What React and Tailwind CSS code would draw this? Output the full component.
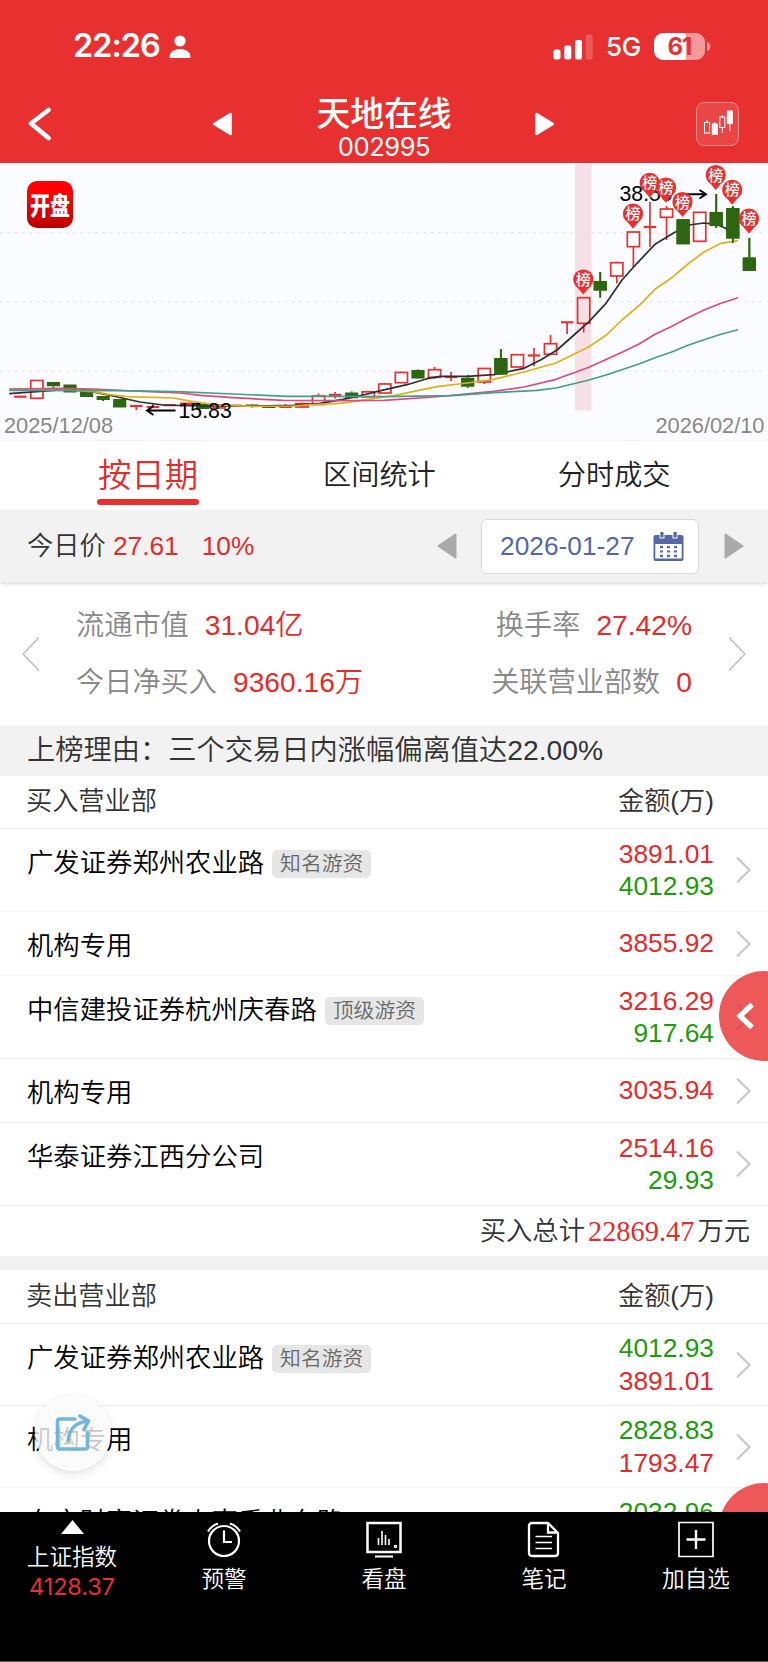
import React from "react";

// [type, bodyTop, bodyBottom, high, low] - a body without height is drawn as a flat line
const candles = [
  ["r", 236.7, 236.7, 236.7, 236.7],
  ["r", 220.5, 238.3, 220.5, 238.3],
  ["g", 222, 226.3, 222, 228],
  ["g", 224.5, 232.5, 224.5, 232.5],
  ["g", 229.5, 237, 229.5, 237],
  ["g", 236, 240, 236, 241],
  ["g", 239, 247.5, 239, 247.5],
  ["r", 246, 246, 246, 250],
  ["r", 246, 248, 243.5, 248],
  ["r", 244.3, 246, 244.3, 246],
  ["r", 242.5, 245, 242.5, 245],
  ["g", 244, 249, 244, 249],
  ["r", 245, 248, 245, 248],
  ["r", 244.8, 246.5, 244.8, 246.5],
  ["g", 244.5, 247, 244, 247.5],
  ["g", 245.8, 248, 245.8, 248],
  ["r", 246.3, 247.5, 244, 247.5],
  ["r", 243.7, 247, 242.5, 247.5],
  ["r", 236, 244.5, 233.5, 244.5],
  ["r", 233.8, 236, 232, 238.5],
  ["g", 232.5, 238.3, 231.5, 238.3],
  ["r", 231.8, 236.8, 231.8, 236.8],
  ["r", 224, 233, 223, 233],
  ["r", 212.5, 222.7, 211.5, 222.7],
  ["g", 210, 218.5, 209.5, 219],
  ["r", 209.7, 217.3, 207, 219],
  ["r", 217, 217, 212, 221],
  ["g", 217.7, 226.8, 215, 228],
  ["r", 208.5, 222, 208, 224],
  ["g", 198, 214.5, 189, 215],
  ["r", 194.7, 207, 194.7, 207],
  ["r", 195.5, 195.5, 188, 206],
  ["r", 183.7, 194.3, 175, 194.3],
  ["r", 162.3, 162.3, 162.3, 174],
  ["r", 137.7, 163.3, 137.7, 172.5],
  ["g", 121, 130.5, 112, 137.5],
  ["r", 102.7, 116, 102.7, 123.5],
  ["r", 72, 86.7, 72, 107],
  ["r", 67, 67, 42, 87],
  ["r", 49, 57.3, 46, 80],
  ["g", 59.3, 84.3, 59.3, 84.3],
  ["r", 52.3, 81.3, 52.3, 81.3],
  ["g", 52, 66, 34, 68],
  ["g", 48, 78.5, 46, 83],
  ["g", 97.5, 111, 78, 111],
];

const averages = [
  {
    color: "#2f2f33",
    points:
      "9.3,233.7 36.7,231.7 60,230 86.7,230.7 113,236 140,242 163,245 200,246 253,246 293,245.3 320,243.3 343,239.3 363,235 384,229.8 407,224.7 427,218.7 440,216.3 467,216.3 494,214.7 524,208.3 541,199.7 557,190 574,175 589,161.7 606,143.3 622,120 637,103.3 655,84.3 674,72.7 689,65 704,63 716,64.3 725,68 732,73",
  },
  {
    color: "#deb01a",
    points:
      "9.3,230 67,230 93,231.7 110,234.7 127,236.7 173,238 193,241.7 217,245 253,246.3 293,246 313,244.7 340,243.3 360,240.7 384,237 394,235.7 414,231.3 437,226.7 467,223 494,219.3 524,212 556,203 589,186.7 606,175.3 622,160 639,145.7 655,129.3 671,118.3 688,104 704,92 721,83.3 738,80.7",
  },
  {
    color: "#d94a87",
    points:
      "9.3,229 60,228.3 93,229 133,231 180,233 200,235.3 233,237.7 283,240.3 333,240.7 384,240.3 434,237 494,231.3 524,227 556,219.3 589,207.3 622,192.3 639,184 655,174.3 671,166.7 688,157.7 704,150 721,143.3 738,137.7",
  },
  {
    color: "#43a084",
    points:
      "9.3,230.3 117,230.7 177,231.7 233,234 287,236.3 333,236.3 384,236.7 451,235.7 494,232.7 537,230.3 556,228 589,220 606,215 639,204 655,197.7 671,192.3 688,185.3 704,179.7 721,174.3 738,169.7",
  },
];

const pins = [
  [583.3, 119.5],
  [633, 53.7],
  [649.7, 22.8],
  [666, 27.7],
  [682.5, 42],
  [715.7, 15],
  [732.2, 29.8],
  [749, 58.7],
];

const buyRows = [
  { name: "广发证券郑州农业路", tag: "知名游资", red: "3891.01", green: "4012.93" },
  { name: "机构专用", red: "3855.92" },
  { name: "中信建投证券杭州庆春路", tag: "顶级游资", red: "3216.29", green: "917.64" },
  { name: "机构专用", red: "3035.94" },
  { name: "华泰证券江西分公司", red: "2514.16", green: "29.93" },
];

const sellRows = [
  { name: "广发证券郑州农业路", tag: "知名游资", red: "3891.01", green: "4012.93" },
  { name: "机构专用", red: "1793.47", green: "2828.83" },
  { name: "东方财富证券山南香曲东路", green: "2032.96" },
];

const StatusBar = () => (
  <div className="flex h-[93px] items-center pl-[73px] pr-[57px] font-['Inter','Noto_Sans_CJK_SC',sans-serif]">
    <span className="w-[88px] whitespace-nowrap text-[32.5px] font-semibold leading-none tracking-[-1px]">22:26</span>
    <svg className="ml-[8px] mt-px" width="22" height="24" viewBox="0 0 22 24" fill="#fff">
      <circle cx="11" cy="6" r="5.6" />
      <path d="M0.5 21.5C0.5 17 5.5 14 11 14s10.500 3 10.500 7.500c0 1-.5 1.500-1.500 1.500H2c-1 0-1.500-.5-1.500-1.500z" />
    </svg>
    <svg className="ml-auto" width="40" height="26" viewBox="0 0 40 26" fill="#fff">
      <rect x="0.500" y="15.500" width="7" height="10" rx="2" />
      <rect x="11.300" y="11.500" width="7" height="14" rx="2" />
      <rect x="22" y="6" width="7" height="19.500" rx="2" />
      <rect x="32.700" y="0.500" width="7" height="25" rx="2" opacity="0.2" />
    </svg>
    <span className="ml-[13px] mt-px text-[26px] font-medium leading-none tracking-[-0.3px]">5G</span>
    <div className="ml-[13px] flex h-[27px] w-[51px] items-center justify-center rounded-[9px] bg-[linear-gradient(to_right,#fff_62%,#f59a9a_62%)]">
      <span className="text-[24px] font-bold leading-none tracking-[-1px] text-[#e83030]">61</span>
    </div>
    <svg className="ml-[2px]" width="4" height="9" viewBox="0 0 4 9">
      <path d="M0 0c2 .5 3.500 2.300 3.500 4.500S2 8.500 0 9z" fill="#f59a9a" />
    </svg>
  </div>
);

const TitleBar = () => (
  <div className="flex h-[70px] items-start pl-[28px]">
    <svg className="mt-[14px]" width="24" height="34" viewBox="0 0 24 34" fill="none">
      <path d="M20.500 3L3 16.500 20.500 31" stroke="#fff" strokeWidth="4.600" strokeLinecap="round" strokeLinejoin="round" />
    </svg>
    <svg className="ml-[160px] mt-[19px]" width="21" height="24" viewBox="0 0 21 24">
      <path d="M18.500 2v20L2 12z" fill="#fff" stroke="#fff" strokeWidth="2.500" strokeLinejoin="round" />
    </svg>
    <div className="ml-[67px] flex w-[168px] flex-col items-center">
      <span className="mt-[2px] h-[38px] text-[33.8px] font-medium leading-[38px]">天地在线</span>
      <span className="font-['Inter',sans-serif] text-[25.5px] font-normal leading-[28px] tracking-[-0.4px]">002995</span>
    </div>
    <svg className="ml-[66px] mt-[19px]" width="21" height="24" viewBox="0 0 21 24">
      <path d="M2.500 2v20L19 12z" fill="#fff" stroke="#fff" strokeWidth="2.500" strokeLinejoin="round" />
    </svg>
    <div className="ml-[141px] mt-[9px] flex h-[44px] w-[43px] items-center justify-center rounded-lg border border-[#f38a8a] bg-[#eb4646]">
      <svg width="30" height="28" viewBox="0 0 30 28" fill="none" stroke="#fff">
        <path d="M4 10v2.500M11.700 12v3M19.300 5v3M19.300 18v5M26.800 14v7" />
        <rect x="1.500" y="12.500" width="5" height="10.500" />
        <rect x="9.300" y="14" width="5" height="10.500" fill="#fff" />
        <rect x="16.800" y="7" width="5" height="10.500" />
        <rect x="24.300" y="1" width="5" height="12.500" fill="#fff" />
      </svg>
    </div>
  </div>
);

const Candle = ({ x, data }) => {
  const [type, top, bottom, high, low] = data;
  const color = type === "r" ? "#e83030" : "#2d6610";
  const flat = bottom - top < 2.6;

  return (
    <g stroke={color} strokeWidth={type === "r" ? 1.7 : 1.8}>
      {high < top && <line x1={x} x2={x} y1={high} y2={top} />}
      {low > bottom && <line x1={x} x2={x} y1={bottom} y2={low} />}
      {flat && type === "r" ? (
        <line x1={x - 6.2} x2={x + 6.2} y1={(top + bottom) / 2} y2={(top + bottom) / 2} strokeWidth={Math.max(2.2, bottom - top)} />
      ) : type === "r" ? (
        <rect x={x - 6.1} y={top} width="12.200" height={bottom - top} fill="none" />
      ) : (
        <rect x={x - 6.6} y={top} width="13.200" height={bottom - top} rx="0.600" fill={color} stroke="none" />
      )}
    </g>
  );
};

const KLineChart = () => (
  <div className="relative h-[278px] border-b border-[#f0f0f2] bg-[#fbfcff]">
    <svg className="block" width="768" height="277" viewBox="0 3 768 277">
      {[73, 142, 211.300].map((y) => (
        <line key={y} x1="0" x2="765" y1={y} y2={y} stroke="#e0e0e5" strokeDasharray="2.800 4.500" />
      ))}
      <rect x="575" y="4.500" width="16.400" height="246" fill="#f6dfe5" />
      {candles.map((c, i) => (
        <Candle key={i} x={20.3 + i * 16.57} data={c} />
      ))}
      {averages.map((a) => (
        <polyline key={a.color} points={a.points} fill="none" stroke={a.color} strokeWidth="1.700" strokeLinejoin="round" />
      ))}
      {candles.map((c, i) => c[0] === "g" && i > 28 && <Candle key={i} x={20.3 + i * 16.57} data={c} />)}
      <g fontFamily="Liberation Sans, sans-serif" fontSize="21.300">
        <text x="178.500" y="258">15.83</text>
        <text x="619.500" y="41">38.59</text>
      </g>
      <g stroke="#000" strokeWidth="1.900" fill="none">
        <path d="M175.500 250.500H148M153.500 246L147 250.500 153.500 255" />
        <path d="M685 34.300H705M699.500 30L706 34.300 699.500 38.500" />
      </g>
      {pins.map(([x, y]) => (
        <g key={x}>
          <path d={`M${x - 7.5} ${y + 6}L${x} ${y + 15}L${x + 7.5} ${y + 6}z`} fill="#e83030" />
          <circle cx={x} cy={y} r="10.100" fill="#e83030" />
          <text x={x} y={y + 5.6} textAnchor="middle" fontSize="15" fontWeight="500" fill="#fff" fontFamily="Noto Sans CJK SC, sans-serif">
            榜
          </text>
        </g>
      ))}
      <g fontFamily="Liberation Sans, sans-serif" fontSize="21.800" fill="#888">
        <text x="4" y="272.500">2025/12/08</text>
        <text x="764.500" y="272.500" textAnchor="end">2026/02/10</text>
      </g>
    </svg>
    <div className="absolute left-[27px] top-[18px] flex h-[47px] w-[46px] items-center justify-center rounded-[10px] bg-linear-to-b from-[#ff0000] from-30% to-[#b80000]">
      <span className="font-['Noto_Sans_CJK_SC',sans-serif] text-[20px] font-black leading-none text-white [transform:scaleY(1.25)]">开盘</span>
    </div>
  </div>
);

const Tabs = () => (
  <div className="flex h-[69px] items-start text-[28.2px] leading-[69px] text-[#222]">
    <div className="ml-[97px] flex h-[64px] w-[102px] flex-col items-center text-[33.4px] text-[#e22b2b]">
      <span className="h-[58px]">按日期</span>
      <span className="h-[6px] w-full shrink-0 rounded-full bg-[#e83030]" />
    </div>
    <span className="ml-[124px]">区间统计</span>
    <span className="ml-[122px]">分时成交</span>
  </div>
);

const Triangle = ({ flip }) => (
  <svg className={flip ? "rotate-180" : ""} width="20" height="26" viewBox="0 0 20 26">
    <path d="M18.500 1.500v23L1.500 13z" fill="#aaa" stroke="#aaa" strokeWidth="2" strokeLinejoin="round" />
  </svg>
);

const PriceBar = () => (
  <div className="relative flex h-[72px] items-center bg-[#f2f2f2] pl-[27px] pr-[24px] text-[26.3px] shadow-[0_2px_4px_rgba(0,0,0,0.14)]">
    <span className="mt-[2px] text-[#333]">今日价</span>
    <span className="ml-[7px] mt-[2px] text-[#e22b2b]">27.61</span>
    <span className="ml-[23px] mt-[2px] text-[#e22b2b]">10%</span>
    <div className="ml-auto flex items-center">
      <Triangle />
      <div className="ml-[24px] mr-[25px] flex h-[55px] w-[218px] items-center rounded-md border border-[#d8d8d8] bg-white pl-[18px]">
        <span className="mt-px text-[#5468a4]">2026-01-27</span>
        <svg className="ml-[18px]" width="31" height="29" viewBox="0 0 31 29">
          <path d="M2.500 3h4v3.500h5V3h8v3.500h5V3h4q2 0 2 2v22q0 2-2 2h-26q-2 0-2-2V5q0-2 2-2z" fill="#5468a4" />
          <path d="M7.300 0h3.200v5.500H7.300zM20.500 0h3.200v5.500h-3.200z" fill="#5468a4" />
          <rect x="2.300" y="12" width="26.400" height="14.500" fill="#fff" />
          <path d="M8.500 14v11M15.500 14v11M22.500 14v11" stroke="#5468a4" strokeWidth="3" strokeDasharray="2.200 2.200" />
        </svg>
      </div>
      <Triangle flip />
    </div>
  </div>
);

const ThinChevron = ({ flip }) => (
  <svg className={flip ? "rotate-180" : ""} width="18" height="34" viewBox="0 0 18 34" fill="none">
    <path d="M17 0.500L1 17 17 33.500" stroke="#b5b5b5" strokeWidth="1.200" />
  </svg>
);

const Stat = ({ label, value }) => (
  <div className="flex gap-4">
    <span className="text-[#888]">{label}</span>
    <span className="text-[#e22b2b]">{value}</span>
  </div>
);

const Stats = () => (
  <div className="flex h-[144px] items-center justify-between px-[22px] text-[28.2px] leading-[57px]">
    <ThinChevron />
    <div className="flex w-[616px] justify-between">
      <div>
        <Stat label="流通市值" value="31.04亿" />
        <Stat label="今日净买入" value="9360.16万" />
      </div>
      <div className="flex flex-col items-end">
        <Stat label="换手率" value="27.42%" />
        <Stat label="关联营业部数" value="0" />
      </div>
    </div>
    <ThinChevron flip />
  </div>
);

const TableHead = ({ title, className }) => (
  <div className={`flex shrink-0 items-center justify-between border-b border-[#f0f0f0] pl-[26px] pr-[54px] text-[26.2px] text-[#333] ${className}`}>
    <span>{title}</span>
    <span>金额(万)</span>
  </div>
);

const Row = ({ row, sell, className }) => {
  const red = row.red && <span className="text-[#e22b2b]">{row.red}</span>;
  const green = row.green && <span className="text-[#1d9a0c]">{row.green}</span>;

  return (
    <div className={`flex shrink-0 border-b border-[#f0f0f0] pl-[27px] pr-[17px] text-[26.35px] text-black ${className}`}>
      <div className="mt-[18px] flex h-[32px] items-center">
        <span className="leading-[32px]">{row.name}</span>
        {row.tag && (
          <span className="ml-[8px] mt-px flex h-[28px] items-center rounded-[5px] bg-[#e6e6e6] px-[8px] text-[20.8px] text-[#666]">{row.tag}</span>
        )}
      </div>
      <div className={`ml-auto flex h-full flex-col items-end leading-[32.5px] ${row.red ? "justify-center" : "pt-[8px]"}`}>
        {sell ? green : red}
        {sell ? red : green}
      </div>
      <svg className="ml-[22px] self-center" width="15" height="28" viewBox="0 0 15 28" fill="none">
        <path d="M1 1.500L13.500 14 1 26.500" stroke="#c8c8c8" strokeWidth="2.200" />
      </svg>
    </div>
  );
};

const SideButton = ({ className }) => (
  <div className={`absolute left-[719px] flex size-[90px] items-center rounded-full bg-[#e83030]/80 pl-[17px] ${className}`}>
    <svg width="19" height="28" viewBox="0 0 19 28" fill="none">
      <path d="M16 2.500L4 14l12 11.500" stroke="#fff" strokeWidth="5.300" />
    </svg>
  </div>
);

const NavItem = ({ label, className, children }) => (
  <div className={`flex w-[80px] flex-col items-center ${className}`}>
    <svg className="mt-[9px]" width="36" height="37" viewBox="0 0 36 37" fill="none" stroke="#fff" strokeWidth="2.200">
      {children}
    </svg>
    <span className="mt-[7px] whitespace-nowrap leading-[30px]">{label}</span>
  </div>
);

const BottomNav = () => (
  <div className="relative flex h-[150px] shrink-0 border-b border-[#555] bg-black pl-[22px] text-[22.6px] text-white">
    <div className="flex w-[100px] flex-col items-center">
      <svg className="mt-[8px]" width="23" height="14" viewBox="0 0 23 14">
        <path d="M11.500 0L23 14H0z" fill="#fff" />
      </svg>
      <span className="mt-[9px] leading-[30px]">上证指数</span>
      <span className="font-['Inter',sans-serif] text-[23.5px] font-normal leading-[27px] tracking-[-0.1px] text-[#e83030]">4128.37</span>
    </div>
    <NavItem label="预警" className="ml-[62px]">
      <circle cx="18" cy="20" r="15" />
      <path d="M18 9.500V21h8M2 10.500Q5 5 12 2.500M34 10.500Q31 5 24 2.500" />
    </NavItem>
    <NavItem label="看盘" className="ml-[80px]">
      <path d="M1.500 2h33v29h-33z" strokeWidth="2.500" />
      <path d="M9 35.500h18" strokeWidth="2" />
      <path d="M12.500 17v7M16 10v14M19.500 14v10M23 18v6" strokeWidth="1.600" />
      <circle cx="29.500" cy="25.500" r="0.700" />
    </NavItem>
    <NavItem label="笔记" className="ml-[80px]">
      <path d="M6 2h16l10 10v20q0 3-3 3H6q-3 0-3-3V5q0-3 3-3zM22 2v9.500h10" strokeWidth="2.300" />
      <path d="M9.500 15.500H26M9.500 21.500H26M9.500 27.500H26" strokeWidth="1.500" />
    </NavItem>
    <NavItem label="加自选" className="ml-[72px]">
      <path d="M1 1.500h34v34H1z" strokeWidth="1.700" />
      <path d="M18 9v19M8.500 18.500h19" strokeWidth="2.400" />
    </NavItem>
  </div>
);

const App = () => {
  return (
    <div className="relative flex h-[1662px] w-[768px] flex-col overflow-hidden bg-white font-['Liberation_Sans','Noto_Sans_CJK_SC',sans-serif] font-[350]">
      <div className="shrink-0 bg-[#e83030] text-white">
        <StatusBar />
        <TitleBar />
      </div>

      <div className="flex h-[1349px] shrink-0 flex-col overflow-hidden *:shrink-0">
        <KLineChart />
        <Tabs />
        <PriceBar />
        <Stats />
        <div className="h-[50px] bg-[#f2f2f2] pl-[27px] text-[28.25px] leading-[49px] text-[#333]">
          上榜理由：三个交易日内涨幅偏离值达22.00%
        </div>

        {/* Buy side */}
        <TableHead title="买入营业部" className="h-[53px]" />
        {buyRows.map((row, i) => (
          <Row key={i} row={row} className={row.green ? "h-[83px]" : "h-[64px]"} />
        ))}
        <div className="flex h-[50px] items-center justify-end pr-[18px] pt-[2px] text-[26.3px] text-[#333]">
          <span>买入总计</span>
          <span className="mx-[3px] font-['Liberation_Serif',serif] text-[28.4px] text-[#e22b2b]">22869.47</span>
          <span>万元</span>
        </div>
        <div className="h-[14px] bg-[#f2f2f2]" />

        {/* Sell side */}
        <TableHead title="卖出营业部" className="h-[54px]" />
        {sellRows.map((row, i) => (
          <Row key={i} row={row} sell className="h-[82px]" />
        ))}
      </div>

      {/* Floating buttons */}
      <SideButton className="top-[971px]" />
      <SideButton className="top-[1483px]" />
      <div className="absolute left-[35px] top-[1395px] flex size-[76px] items-center justify-center rounded-full bg-[#fafafa]/80 shadow-[0_3px_10px_rgba(0,0,0,0.12)]">
        <svg width="36" height="38" viewBox="0 0 36 38" fill="none" stroke="#74b6da" strokeWidth="3.600" strokeLinecap="round" strokeLinejoin="round">
          <path d="M20 5H5Q2.500 5 2.500 7.500V32.500Q2.500 35 5 35H30Q32.500 35 32.500 32.500V19" />
          <path d="M13.500 27C13.500 16 20 8.500 33 7M25 2L33.500 7 29 15.500" />
        </svg>
      </div>

      <BottomNav />
    </div>
  );
};

export default App;
